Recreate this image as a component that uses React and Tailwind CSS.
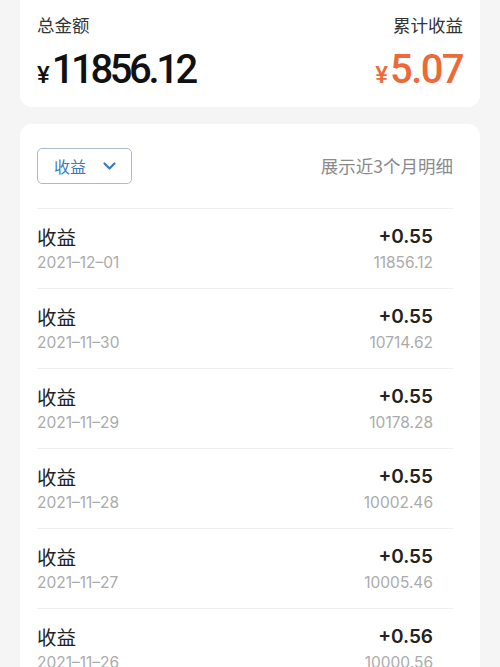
import React from "react";

const rows = [
  { date: "2021-12-01", amt: "+0.55", bal: "11856.12" },
  { date: "2021-11-30", amt: "+0.55", bal: "10714.62" },
  { date: "2021-11-29", amt: "+0.55", bal: "10178.28" },
  { date: "2021-11-28", amt: "+0.55", bal: "10002.46" },
  { date: "2021-11-27", amt: "+0.55", bal: "10005.46" },
  { date: "2021-11-26", amt: "+0.56", bal: "10000.56" },
];

const cjk = { fontFamily: '"Noto Sans CJK SC", sans-serif' };

export default function App() {
  return (
    <div
      className="w-[500px] h-[667px] overflow-hidden bg-[#f5f5f5] px-[20px]"
      style={{ fontFamily: 'Inter, "Noto Sans CJK SC", sans-serif' }}
    >
      <div className="bg-white rounded-b-[12px] h-[107px] pl-[17px] pr-[17px] pt-[12px] flex justify-between">
        <div className="flex flex-col">
          <div className="text-[17.5px] leading-[26px] text-[#333]" style={cjk}>总金额</div>
          <div className="flex items-baseline mt-[10px] text-[#111]" style={{ fontFamily: 'Roboto, sans-serif' }}>
            <span className="text-[24px] font-medium mr-[2px]">¥</span>
            <span className="text-[40px] leading-[44px] font-medium tracking-[-0.085em]">11856.12</span>
          </div>
        </div>
        <div className="flex flex-col items-end">
          <div className="text-[17.5px] leading-[26px] text-[#333]" style={cjk}>累计收益</div>
          <div className="flex items-baseline mt-[10px] text-[#ec6a38]" style={{ fontFamily: 'Roboto, sans-serif' }}>
            <span className="text-[24px] font-medium mr-[2px]">¥</span>
            <span className="text-[40px] leading-[44px] font-medium tracking-[-0.04em]">5.07</span>
          </div>
        </div>
      </div>

      <div className="bg-white rounded-[12px] mt-[17px] pl-[17px] pr-[27px] pt-[24px] h-[600px]">
        <div className="flex items-center justify-between h-[36px]">
          <div className="w-[95px] h-[36px] border border-[#a9bccd] rounded-[5px] flex items-center pl-[16px]">
            <span className="text-[16px] text-[#3b78bd]" style={cjk}>收益</span>
            <svg className="ml-[16px]" width="15" height="10" viewBox="0 0 15 10" fill="none">
              <path d="M2.5 2.5 L7.5 7.5 L12.5 2.5" stroke="#3b78bd" strokeWidth="2.2" strokeLinecap="round" strokeLinejoin="round" />
            </svg>
          </div>
          <span className="text-[17.5px] text-[#8a8a8a]" style={cjk}>展示近3个月明细</span>
        </div>
        <div className="mt-[24px]">
          {rows.map((r, i) => (
            <div key={i} className="border-t border-[#efefef] h-[80px] flex justify-between pr-[20px] pt-[14px]">
              <div className="flex flex-col">
                <span className="text-[19.5px] leading-[28px] text-[#222]" style={cjk}>收益</span>
                <span className="text-[15.5px] leading-[24px] text-[#ababab]">{r.date.replace(/-/g, "–")}</span>
              </div>
              <div className="flex flex-col items-end">
                <span className="text-[19px] leading-[28px] font-semibold text-[#222]">{r.amt}</span>
                <span className="text-[15.5px] leading-[24px] text-[#ababab]">{r.bal}</span>
              </div>
            </div>
          ))}
        </div>
      </div>
    </div>
  );
}
